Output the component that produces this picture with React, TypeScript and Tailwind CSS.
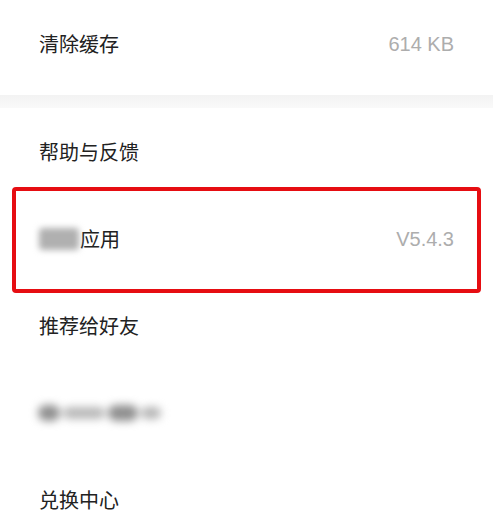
const FONT = "font-['Noto_Sans_CJK_SC','Noto_Sans',sans-serif]";
const VALUE = "font-['Liberation_Sans','Noto_Sans_CJK_SC',sans-serif] text-[20px] text-[#adadad]";

function Row({ label, value }: { label: React.ReactNode; value?: string }) {
  return (
    <div className="flex h-[87px] items-center justify-between pl-[39px] pr-[39px]">
      <span className="text-[20px] text-[#222222]">{label}</span>
      {value && <span className={VALUE}>{value}</span>}
    </div>
  );
}

export default function App() {
  return (
    <div className={`relative h-[519px] w-[493px] overflow-hidden bg-white ${FONT}`}>
      <div className="flex h-[95px] items-start justify-between pl-[39px] pr-[39px] pt-[30px]">
        <span className="text-[20px] leading-[28px] text-[#222222]">清除缓存</span>
        <span className={`${VALUE} leading-[28px]`}>614 KB</span>
      </div>
      <div className="h-[13px] bg-gradient-to-b from-[#f3f3f3] to-[#f9f9f9]" />
      <Row label="帮助与反馈" />
      <Row
        label={
          <span className="flex items-center">
            <span className="mr-[1px] inline-block h-[22px] w-[40px] rounded-sm bg-[#b0b0b0] blur-[3px]" />
            应用
          </span>
        }
        value="V5.4.3"
      />
      <Row label="推荐给好友" />
      <div className="flex h-[87px] items-center pl-[38px]">
        <span className="flex items-center gap-[3px] blur-[4px]">
          <span className="h-[16px] w-[22px] rounded-full bg-[#8f8f8f]" />
          <span className="h-[12px] w-[42px] rounded-full bg-[#b8b8b8]" />
          <span className="h-[16px] w-[30px] rounded-full bg-[#8f8f8f]" />
          <span className="h-[12px] w-[20px] rounded-full bg-[#b5b5b5]" />
        </span>
      </div>
      <Row label="兑换中心" />
      <div className="pointer-events-none absolute left-[12px] top-[187px] h-[106px] w-[469px] rounded-[4px] border-[4px] border-[#e60d12]" />
    </div>
  );
}
